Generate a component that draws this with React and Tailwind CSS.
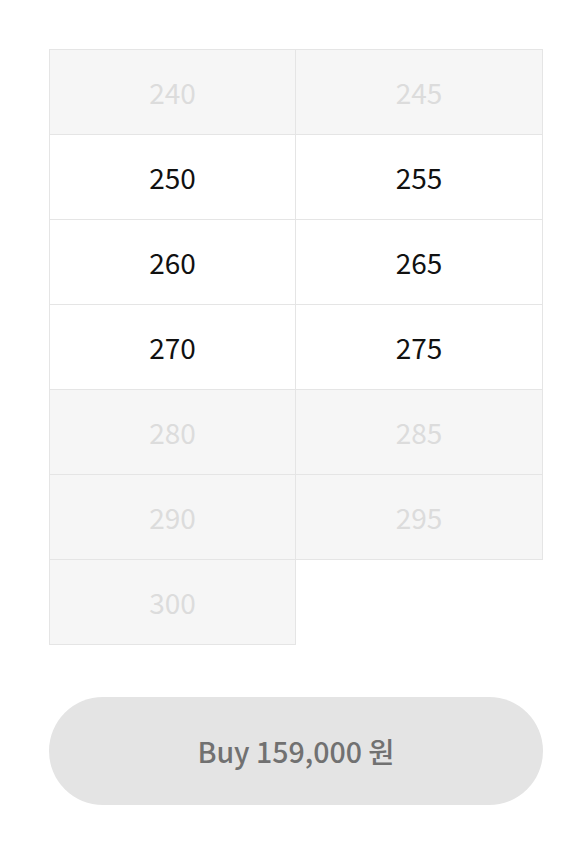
import React from "react";

const sizes = [
  { size: 240, soldOut: true },
  { size: 245, soldOut: true },
  { size: 250, soldOut: false },
  { size: 255, soldOut: false },
  { size: 260, soldOut: false },
  { size: 265, soldOut: false },
  { size: 270, soldOut: false },
  { size: 275, soldOut: false },
  { size: 280, soldOut: true },
  { size: 285, soldOut: true },
  { size: 290, soldOut: true },
  { size: 295, soldOut: true },
  { size: 300, soldOut: true },
];

function SizeCell({ item }) {
  return (
    <button
      disabled={item.soldOut}
      className={
        item.soldOut
          ? "h-[85px] border-r border-b border-[#e5e5e5] bg-[#f6f6f6] text-[#dcdcdc] text-[28px] flex items-center justify-center"
          : "h-[85px] border-r border-b border-[#e5e5e5] bg-white text-[#111] text-[28px] flex items-center justify-center"
      }
    >
      {item.size}
    </button>
  );
}

export default function App() {
  return (
    <div
      className="min-h-screen bg-white pt-[49px] px-[49px]"
      style={{ fontFamily: '"Noto Sans CJK KR", "Noto Sans", sans-serif' }}
    >
      <div className="w-[494px] grid grid-cols-[246px_247px] border-t border-l border-[#e5e5e5]">
        {sizes.map((item) => (
          <SizeCell key={item.size} item={item} />
        ))}
      </div>

      <button className="mt-[52px] w-[494px] h-[108px] rounded-full bg-[#e4e4e4] text-[#717171] text-[28.5px] font-medium flex items-center justify-center">
        Buy 159,000 원
      </button>
    </div>
  );
}
